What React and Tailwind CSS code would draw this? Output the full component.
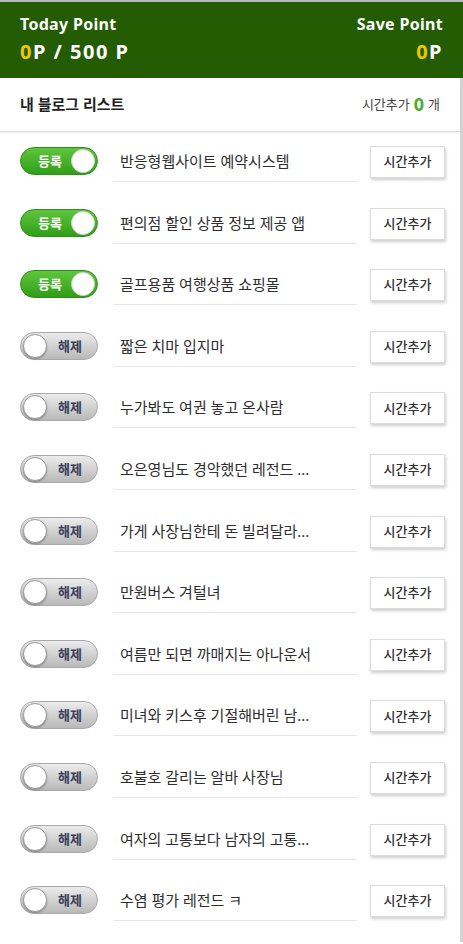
import React, { useState } from 'react';

const initialPosts = [
    { id: 1, title: '반응형웹사이트 예약시스템', on: true },
    { id: 2, title: '편의점 할인 상품 정보 제공 앱', on: true },
    { id: 3, title: '골프용품 여행상품 쇼핑몰', on: true },
    { id: 4, title: '짧은 치마 입지마', on: false },
    { id: 5, title: '누가봐도 여권 놓고 온사람', on: false },
    { id: 6, title: '오은영님도 경악했던 레전드 ...', on: false },
    { id: 7, title: '가게 사장님한테 돈 빌려달라...', on: false },
    { id: 8, title: '만원버스 겨털녀', on: false },
    { id: 9, title: '여름만 되면 까매지는 아나운서', on: false },
    { id: 10, title: '미녀와 키스후 기절해버린 남...', on: false },
    { id: 11, title: '호불호 갈리는 알바 사장님', on: false },
    { id: 12, title: '여자의 고통보다 남자의 고통...', on: false },
    { id: 13, title: '수염 평가 레전드 ㅋ', on: false },
];

function Toggle({ on, onClick }) {
    return (
        <button
            onClick={onClick}
            className={
                on
                    ? 'relative w-[78px] h-[28px] rounded-full border border-[#2f8f18] bg-gradient-to-b from-[#5ec63c] to-[#2f9e16] shrink-0'
                    : 'relative w-[78px] h-[28px] rounded-full border border-[#a9a9a9] bg-gradient-to-b from-[#ececec] to-[#b9b9b9] shrink-0'
            }
        >
            {on ? (
                <>
                    <span className="absolute left-[17px] top-[4px] text-[13px] font-bold text-white leading-[18px]">등록</span>
                    <span className="absolute right-[2px] top-[1px] w-[24px] h-[24px] rounded-full bg-white border border-[#cfcfcf]"></span>
                </>
            ) : (
                <>
                    <span className="absolute left-[2px] top-[1px] w-[24px] h-[24px] rounded-full bg-white border border-[#9a9a9a] shadow-[0_1px_2px_rgba(0,0,0,0.3)]"></span>
                    <span className="absolute left-[37px] top-[4px] text-[13px] font-bold text-[#3b3b5a] leading-[18px]">해제</span>
                </>
            )}
        </button>
    );
}

export default function App() {
    const [posts, setPosts] = useState(initialPosts);
    const [added, setAdded] = useState(0);

    const togglePost = (id) => {
        setPosts(posts.map(p => (p.id === id ? { ...p, on: !p.on } : p)));
    };

    return (
        <div className="w-[463px] h-[944px] bg-white overflow-hidden" style={{ fontFamily: '"Noto Sans", "Noto Sans CJK KR", sans-serif' }}>
            <div className="border-t-2 border-[#b8b8b8] bg-[#235c03] h-[78px] px-5 pt-[11px] flex justify-between text-white">
                <div>
                    <div className="text-[16px] font-bold leading-[23px] tracking-[0.3px]">Today Point</div>
                    <div className="text-[20px] font-bold leading-[28px] mt-[2px] tracking-[1.5px]">
                        <span className="text-[#f0c800]">0</span>P / 500 P
                    </div>
                </div>
                <div className="text-right">
                    <div className="text-[16px] font-bold leading-[23px] tracking-[0.3px]">Save Point</div>
                    <div className="text-[20px] font-bold leading-[28px] mt-[2px] tracking-[1.5px]">
                        <span className="text-[#f0c800]">0</span>P
                    </div>
                </div>
            </div>

            <div className="border-r-[3px] border-[#d4d4d4] h-[864px]">
                <div className="h-[54px] px-5 flex items-center justify-between border-b border-[#e0e0e0] shadow-[0_1px_2px_rgba(0,0,0,0.08)]">
                    <span className="text-[15px] font-bold text-[#222]">내 블로그 리스트</span>
                    <span className="text-[13px] text-[#444] flex items-center gap-1">
                        시간추가 <span className="text-[18px] font-bold text-[#4aae28]">{added}</span> 개
                    </span>
                </div>

                <div>
                    {posts.map(post => (
                        <div key={post.id} className="h-[61.6px] pl-5 pr-[15px] pt-[15px] flex items-start">
                            <Toggle on={post.on} onClick={() => togglePost(post.id)} />
                            <div className="ml-[15px] w-[244px] border-b border-[#e6e6e6] pl-[7px] pb-[8px] pt-[2px]">
                                <div className="text-[15px] text-[#2e2e2e] leading-[24px] whitespace-nowrap">{post.title}</div>
                            </div>
                            <button
                                onClick={() => setAdded(added + 1)}
                                className="ml-auto -mt-[1px] w-[75px] h-[32px] bg-white border border-[#dcdcdc] shadow-[1px_2px_3px_rgba(0,0,0,0.2)] text-[13px] font-medium text-[#333]"
                            >
                                시간추가
                            </button>
                        </div>
                    ))}
                </div>
            </div>
        </div>
    );
}
